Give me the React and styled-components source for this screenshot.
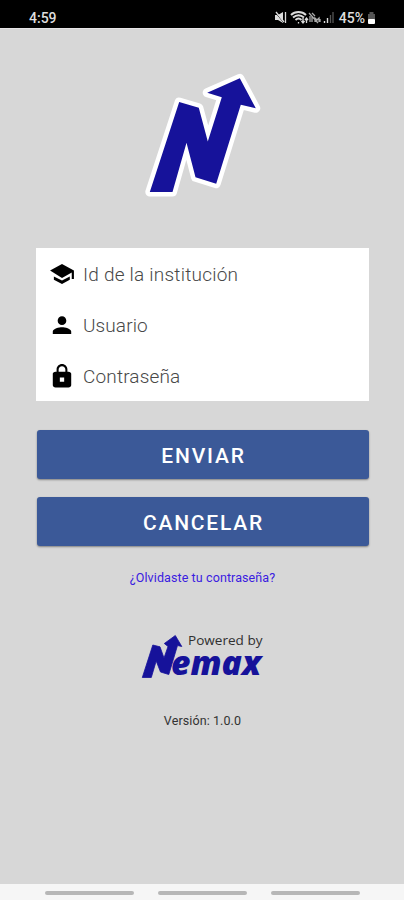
import React from "react";
import styled, { createGlobalStyle } from "styled-components";

const GlobalStyle = createGlobalStyle`
  * { box-sizing: border-box; }
  body { margin: 0; background: #d7d7d7; font-family: Roboto, "Liberation Sans", sans-serif; }
`;

const Screen = styled.div`
  width: 404px;
  height: 900px;
  display: flex;
  flex-direction: column;
  background: #d7d7d7;
  overflow: hidden;
`;

const StatusBar = styled.header`
  height: 28px;
  flex: none;
  display: flex;
  align-items: flex-start;
  justify-content: space-between;
  padding: 9px 28px 0 29px;
  background: #000;
  color: #dedede;
  font-size: 14px;
  line-height: 18px;
  font-weight: 500;
`;

const StatusIcons = styled.div`
  display: flex;
  align-items: center;
  height: 18px;
  svg { display: block; }
`;

const Battery = styled.span`
  margin: 0 2px 0 5px;
`;

const Content = styled.main`
  flex: 1;
  display: flex;
  flex-direction: column;
  align-items: center;
  padding: 42px 35px 0 36px;
  border-top: 1px solid #e6e4e6;
`;

const LogoMark = styled.svg`
  display: block;
  width: 124px;
  height: 130px;
  flex: none;
`;

const Fields = styled.form`
  width: 100%;
  height: 153px;
  flex: none;
  margin-top: 47px;
  background: #fff;
`;

const Field = styled.label`
  height: 51px;
  display: flex;
  align-items: center;
  padding-left: 13px;
  svg { width: 26px; height: 26px; flex: none; fill: #000; }
`;

const Input = styled.input`
  width: 270px;
  margin: 2px 0 0 8px;
  padding: 0;
  border: 0;
  outline: 0;
  background: transparent;
  font: 300 19px/28px Roboto, "Liberation Sans", sans-serif;
  letter-spacing: ${(p) => p.$spacing};
  color: #333;
  &::placeholder { color: #484848; opacity: 1; }
`;

const Button = styled.button`
  width: 332px;
  height: 49px;
  flex: none;
  margin: ${(p) => p.$gap} 0 0;
  padding: 2px 0 0 2px;
  border: 0;
  border-radius: 3px;
  background: #3b5998;
  color: #fff;
  font: 500 21px/24px Roboto, "Liberation Sans", sans-serif;
  letter-spacing: 1.8px;
  box-shadow: 0 1px 2px rgba(0, 0, 0, 0.4);
`;

const ForgotLink = styled.a`
  margin-top: 22px;
  font-size: 12.5px;
  line-height: 19px;
  letter-spacing: 0.1px;
  color: #3a20e0;
  white-space: nowrap;
`;

const Brand = styled.svg`
  display: block;
  width: 132px;
  height: 52px;
  flex: none;
  margin-top: 44px;
  overflow: visible;
`;

const Version = styled.p`
  margin: 30px 0 0;
  font-size: 12.5px;
  line-height: 16px;
  letter-spacing: 0.1px;
  color: #333;
`;

const NavBar = styled.footer`
  height: 16px;
  flex: none;
  display: flex;
  justify-content: center;
  gap: 24px;
  padding-top: 7px;
  background: #f6f6f6;
`;

const NavPill = styled.span`
  width: 89px;
  height: 4px;
  border-radius: 2px;
  background: #b7b7b7;
`;

const fields = [
  {
    label: "Id de la institución",
    spacing: "0.22px",
    type: "text",
    path: "M4.500 14.200v3.200L12 21.200l7.200-3.800v-3.200L12 18zM12 2.800 1 8.800l11 6.800 9-5V16.500h2V8.800z",
  },
  {
    label: "Usuario",
    spacing: "0.1px",
    type: "text",
    path: "M12 12c2.21 0 4-1.79 4-4s-1.79-4-4-4-4 1.79-4 4 1.79 4 4 4zm0 2c-2.67 0-8.500 1.34-8.500 4v2.300h17v-2.300c0-2.66-5.830-4-8.500-4z",
  },
  {
    label: "Contraseña",
    spacing: "0.15px",
    type: "password",
    path: "M18 8h-1V6c0-2.76-2.24-5-5-5S7 3.24 7 6v2H6c-1.400 0-2.500.9-2.500 2v10.500c0 1.100 1.100 2 2.500 2h12c1.400 0 2.500-.9 2.500-2V10c0-1.100-1.100-2-2.500-2zM10 13.300h4v4h-4zM15.100 8H8.900V6c0-1.710 1.390-3.100 3.100-3.100s3.100 1.390 3.100 3.100z",
  },
];

function StatusGlyphs() {
  return (
    <svg width="60" height="18" viewBox="0 0 60 18" fill="none" stroke="#dcdcdc">
      <path d="M1 6h3l5-3v11l-5-3H1z" fill="#dcdcdc" stroke="none" />
      <path d="M1 3l9 11" stroke="#000" />
      <path d="M2 3l8 10M11.500 3v11" strokeWidth="1.300" />
      <path d="M17 6c4-4 11-4 15 0M19 8.500c3.500-3 7.500-3 11 0M21.500 11c2-2 4-2 6 0" strokeWidth="1.900" />
      <path d="M24.500 13v1.500M29 9v5M27.500 12l1.500 2 1.500-2M32.500 14V9M31 11l1.500-2 1.500 2" strokeWidth="1.300" />
      <path d="M35 4l9 10M36 7v6M38 8v5M41 13V9l2 2 2-2v4M46 10v3M38 4l3 3" stroke="#aaa" strokeWidth="1.300" />
      <path d="M50.500 12v2M53.500 9v5" strokeWidth="1.400" />
      <path d="M56.500 6v8M59 3v11" stroke="#555" strokeWidth="1.300" />
    </svg>
  );
}

export default function App() {
  return (
    <>
      <GlobalStyle />
      <Screen>
        <StatusBar>
          <span>4:59</span>
          <StatusIcons>
            <StatusGlyphs />
            <Battery>45%</Battery>
            <svg width="9" height="14" viewBox="0 0 9 14">
              <path d="M2.500 1h4v2H8v6H1V3h1.500z" fill="#555" />
              <rect x="1" y="8" width="7" height="5" rx="1" fill="#fff" />
            </svg>
          </StatusIcons>
        </StatusBar>
        <Content>
          <LogoMark viewBox="140.500 71 124 130" role="img" aria-label="Nemax">
            <path
              d="M178.700 102L198.300 107.700L207.300 141.500L221.300 97.300L206.700 92.700L239.300 78.300L255.300 108.300L240.300 104.700L215.700 183.700L195 177.300L186 142.700L172 192H149.300Z"
              fill="#16129a"
              stroke="#fff"
              strokeWidth="9"
              strokeLinejoin="round"
              paintOrder="stroke"
            />
          </LogoMark>
          <Fields>
            {fields.map((f) => (
              <Field key={f.label}>
                <svg viewBox="0 0 24 24"><path fillRule="evenodd" d={f.path} /></svg>
                <Input type={f.type} placeholder={f.label} $spacing={f.spacing} />
              </Field>
            ))}
          </Fields>
          <Button type="button" $gap="29px">ENVIAR</Button>
          <Button type="button" $gap="18px">CANCELAR</Button>
          <ForgotLink>¿Olvidaste tu contraseña?</ForgotLink>
          <Brand viewBox="137.500 632 132 52">
            <path
              d="M142.800 678.500L153.300 646L160.500 647.800L164.500 659L168.500 647.500L164.800 644.500L175.800 636.500L182.300 647.500L178 646.500L169.300 675.500L161 673L156.700 662L151.800 678.500Z"
              fill="#16129a"
              stroke="#16129a"
              strokeWidth="0.800"
            />
            <text x="188.500" y="646" fontFamily="Open Sans" fontSize="13" fill="#303030" textLength="74.500" lengthAdjust="spacingAndGlyphs">Powered by</text>
            <text
              x="171.500"
              y="675.500"
              fontFamily="Open Sans"
              fontWeight="800"
              fontStyle="italic"
              fontSize="33"
              fill="#16129a"
              textLength="90"
              lengthAdjust="spacingAndGlyphs"
            >
              emax
            </text>
          </Brand>
          <Version>Versión: 1.0.0</Version>
        </Content>
        <NavBar>
          <NavPill />
          <NavPill />
          <NavPill />
        </NavBar>
      </Screen>
    </>
  );
}
